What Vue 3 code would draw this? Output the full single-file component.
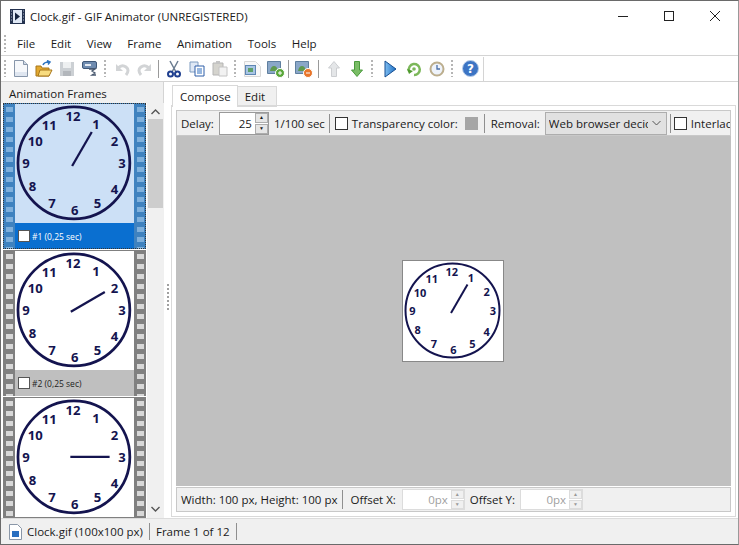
<script setup>
const menus = ['File', 'Edit', 'View', 'Frame', 'Animation', 'Tools', 'Help']

const numerals = [
  { t: '12', x: 48.7, y: 10.7 },
  { t: '1', x: 68, y: 17.3 },
  { t: '2', x: 83.6, y: 31.3 },
  { t: '3', x: 90, y: 49.7 },
  { t: '4', x: 83.7, y: 71.3 },
  { t: '5', x: 69.3, y: 83.3 },
  { t: '6', x: 50.3, y: 89.3 },
  { t: '7', x: 31, y: 83.3 },
  { t: '8', x: 14.7, y: 69 },
  { t: '9', x: 9.3, y: 50 },
  { t: '10', x: 17, y: 31.7 },
  { t: '11', x: 28.7, y: 18 },
]

// the third frame runs past the bottom of the list, its caption is never seen
const frames = [
  { id: 1, hour: 1, selected: true, caption: true },
  { id: 2, hour: 2, selected: false, caption: true },
  { id: 3, hour: 3, selected: false, caption: false },
]

const hand = (hour) => {
  const a = (hour * 30 * Math.PI) / 180
  return {
    x1: 49.5 - 3 * Math.sin(a),
    y1: 49.5 + 3 * Math.cos(a),
    x2: 49.5 + 30 * Math.sin(a),
    y2: 49.5 - 30 * Math.cos(a),
  }
}

const holes = Array.from({ length: 15 })
</script>

<template>
  <div class="window">
    <header class="titlebar">
      <svg class="app-icon" width="15" height="15" viewBox="0 0 15 15">
        <rect width="15" height="15" fill="#24324f" />
        <rect x="3" y="1" width="9" height="13" fill="#dfe8f5" />
        <path d="M5 3.5l5 4-5 4z" fill="#14233f" />
        <path d="M1 2h1M1 5h1M1 8h1M1 11h1M13 2h1M13 5h1M13 8h1M13 11h1" stroke="#aebbd0" />
      </svg>
      <span class="title">Clock.gif - GIF Animator (UNREGISTERED)</span>
      <div class="controls">
        <button class="ctl"><svg width="10" height="10"><path d="M0 5.5h10" stroke="#222" /></svg></button>
        <button class="ctl"><svg width="10" height="10"><rect x=".5" y=".5" width="9" height="9" fill="none" stroke="#222" /></svg></button>
        <button class="ctl"><svg width="10" height="10"><path d="M0 0l10 10M10 0L0 10" stroke="#222" /></svg></button>
      </div>
    </header>

    <nav class="menubar">
      <i class="grip"></i>
      <span v-for="m in menus" :key="m" class="menu">{{ m }}</span>
    </nav>

    <div class="toolbar">
      <i class="grip"></i>
      <button class="tool"><svg width="14" height="17" viewBox="0 0 14 17"><path d="M.5.5h9l4 4v12H.5z" fill="#f6f8fb" stroke="#8796aa" /><path d="M9.5.5v4h4" fill="#cfd9e6" stroke="#8796aa" /><path d="M1 12h12v4H1z" fill="#dfe6f0" /></svg></button>
      <button class="tool"><svg width="18" height="18" viewBox="0 0 18 18"><path d="M1 6h5l1 2h7v8H1z" fill="#e3a92f" stroke="#a8761a" /><path d="M3 16l2-6h12l-3 6z" fill="#f8dc7f" stroke="#a8761a" /><path d="M8 5q1-3 6-3M12 .5l3 1.5-2 2.5" fill="none" stroke="#2f74c0" stroke-width="1.5" /></svg></button>
      <button class="tool"><svg width="16" height="16" viewBox="0 0 16 16"><path d="M1 1h14v14H1z" fill="#ccd0d4" /><path d="M4 1h8v6H4z" fill="#eef0f1" /><path d="M4 10h8v5H4z" fill="#b3b7bc" /></svg></button>
      <button class="tool"><svg width="15" height="18" viewBox="0 0 15 18"><rect x=".5" y="1.5" width="14" height="7" rx="1.5" fill="#6f8cb0" stroke="#3f5878" /><path d="M3 4h6v2H3z" fill="#e4eaf2" /><path d="M7 9h6l-3 2 3 2-3 2h4" fill="none" stroke="#4a5a70" stroke-width="1.3" /></svg></button>
      <i class="dots"></i>
      <button class="tool nudge"><svg width="16" height="16" viewBox="0 0 16 16"><path d="M3 7q4-4 8-1t0 8" fill="none" stroke="#d2d4d6" stroke-width="3" /><path d="M1 3v7h7z" fill="#d2d4d6" /></svg></button>
      <button class="tool"><svg width="16" height="16" viewBox="0 0 16 16"><path d="M13 7q-4-4-8-1t0 8" fill="none" stroke="#d2d4d6" stroke-width="3" /><path d="M15 3v7H8z" fill="#d2d4d6" /></svg></button>
      <i class="line"></i>
      <button class="tool"><svg width="14" height="18" viewBox="0 0 14 18"><path d="M3 1l6 11M11 1L5 12" stroke="#6b7c90" stroke-width="1.5" /><circle cx="3.5" cy="14" r="2.5" fill="none" stroke="#1f3f8f" stroke-width="2" /><circle cx="10.5" cy="14" r="2.5" fill="none" stroke="#1f3f8f" stroke-width="2" /></svg></button>
      <button class="tool"><svg width="16" height="16" viewBox="0 0 16 16"><path d="M1 1h8v10H1z" fill="#dfe8f5" stroke="#7f9cc0" /><path d="M6 5h9v10H6z" fill="#fff" stroke="#2f5fa8" /><path d="M8 8h5M8 10h5M8 12h5" stroke="#2f6fc0" /></svg></button>
      <button class="tool"><svg width="16" height="17" viewBox="0 0 16 17"><path d="M1 3h10v12H1z" fill="#d5d4ce" stroke="#b5b5b5" /><path d="M4 1h4v3H4z" fill="#c4c4c4" /><path d="M7 7h8v9H7z" fill="#f2f2f2" stroke="#c4c4c4" /></svg></button>
      <i class="dots"></i>
      <button class="tool nudge"><svg width="17" height="16" viewBox="0 0 17 16"><path d="M.5.5h11l5 5v10H.5z" fill="#f8f8f8" stroke="#d8d8d8" /><rect x="1.5" y="4.5" width="10" height="9" fill="#a9c6e4" stroke="#5f86b4" /><rect x="4" y="7" width="5" height="4" fill="#5fa06a" /></svg></button>
      <button class="tool nudge"><svg width="18" height="18" viewBox="0 0 18 18"><path d="M.5 1.5h13v12H.5z" fill="#8aa7c8" stroke="#5f7f9f" /><path d="M3 11q1-5 4-5t4 5z" fill="#5f9a4f" /><circle cx="13" cy="13" r="4.5" fill="#5aa73a" stroke="#fff" /><path d="M11 13h4M13 11v4" stroke="#fff" /></svg></button>
      <i class="line"></i>
      <button class="tool"><svg width="18" height="18" viewBox="0 0 18 18"><path d="M.5 1.5h13v12H.5z" fill="#8aa7c8" stroke="#5f7f9f" /><path d="M3 11q1-5 4-5t4 5z" fill="#5f9a4f" /><circle cx="13" cy="13" r="4.5" fill="#e8752a" stroke="#fff" /><path d="M11 13h4" stroke="#fff" /></svg></button>
      <i class="line"></i>
      <button class="tool"><svg width="14" height="16" viewBox="0 0 14 16"><path d="M7 .5L12.5 7H9.5v8.5h-5V7H1.5z" fill="#e4e6e8" stroke="#ccced1" /></svg></button>
      <button class="tool"><svg width="14" height="16" viewBox="0 0 14 16"><path d="M7 15.5L12.5 9H9.5V.5h-5V9H1.5z" fill="#7abd66" stroke="#4a9a3c" /></svg></button>
      <i class="dots"></i>
      <button class="tool shift"><svg width="13" height="18" viewBox="0 0 13 18"><defs><linearGradient id="pl" x1="0" x2="1"><stop offset="0" stop-color="#7fbdf0" /><stop offset="1" stop-color="#1c6fc4" /></linearGradient></defs><path d="M1 1l11 8-11 8z" fill="url(#pl)" stroke="#174f92" /></svg></button>
      <button class="tool"><svg width="16" height="16" viewBox="0 0 16 16"><path d="M3 10A5.5 5.5 0 1 1 8 14" fill="none" stroke="#7cb85a" stroke-width="2.5" /><path d="M1 8l2 5 4-3z" fill="#4f9a2e" /><circle cx="8" cy="8" r="1.8" fill="#7cb85a" /></svg></button>
      <button class="tool"><svg width="16" height="16" viewBox="0 0 16 16"><circle cx="8" cy="8" r="6.5" fill="#eef3fb" stroke="#bcae8e" stroke-width="2" /><path d="M8 4v4h3" fill="none" stroke="#4a6fa8" stroke-width="1.3" /></svg></button>
      <i class="dots"></i>
      <button class="tool shift"><svg width="17" height="17" viewBox="0 0 17 17"><circle cx="8.5" cy="8.5" r="8" fill="#3c74c4" stroke="#b7cdea" /><text x="8.5" y="12.5" text-anchor="middle" class="q">?</text></svg></button>
      <i class="line end"></i>
    </div>

    <main class="workspace">
      <aside class="side">
        <h2 class="side-head">Animation Frames</h2>
        <div class="side-body">
          <div class="frame-list">
            <div v-for="f in frames" :key="f.id" class="frame" :class="{ selected: f.selected }">
              <div class="film">
                <i v-for="(h, n) in holes" :key="n"></i>
              </div>
              <div class="frame-mid">
                <svg class="thumb" viewBox="0 0 100 100">
                  <circle cx="49.5" cy="49.5" r="47" fill="none" stroke="#14144f" stroke-width="2.3" />
                  <text v-for="d in numerals" :key="d.t" :x="d.x" :y="d.y + 4" text-anchor="middle" class="num">{{ d.t }}</text>
                  <line v-bind="hand(f.hour)" stroke="#14144f" stroke-width="1.9" />
                </svg>
                <div v-if="f.caption" class="caption">
                  <i class="check small"></i>
                  <span>#{{ f.id }} (0,25 sec)</span>
                </div>
              </div>
              <div class="film">
                <i v-for="(h, n) in holes" :key="n"></i>
              </div>
            </div>
          </div>
          <div class="scroll">
            <svg class="arrow" width="9" height="6"><path d="M.5 5L4.5 1l4 4" fill="none" stroke="#555" stroke-width="1.4" /></svg>
            <div class="thumb-bar"></div>
            <svg class="arrow bottom" width="9" height="6"><path d="M.5 1l4 4 4-4" fill="none" stroke="#555" stroke-width="1.4" /></svg>
          </div>
        </div>
      </aside>

      <div class="splitter"><i class="split-dots"></i></div>

      <section class="right">
        <div class="tabs">
          <span class="tab active">Compose</span>
          <span class="tab">Edit</span>
        </div>
        <div class="page">
          <div class="opts">
            <span>Delay:</span>
            <div class="spin delay">
              <span class="val">25</span>
              <div class="btns"><b>▲</b><b>▼</b></div>
            </div>
            <span>1/100 sec</span>
            <i class="vline after-sec"></i>
            <i class="check"></i>
            <span class="pull">Transparency color:</span>
            <i class="swatch"></i>
            <i class="vline after-swatch"></i>
            <span class="tight">Removal:</span>
            <div class="select">
              <span class="sel-text">Web browser decides</span>
              <svg width="9" height="6"><path d="M.5 1l4 4 4-4" fill="none" stroke="#555" /></svg>
            </div>
            <i class="vline pull3"></i>
            <i class="check pull3"></i>
            <span class="pull">Interlaced</span>
          </div>
          <div class="canvas">
            <svg class="stage" width="102" height="102" viewBox="-1 -1 102 102">
              <rect x="-.5" y="-.5" width="101" height="101" fill="#fff" stroke="#888" />
              <circle cx="49.5" cy="49.5" r="47" fill="none" stroke="#14144f" stroke-width="2" />
              <text v-for="d in numerals" :key="d.t" :x="d.x" :y="d.y + 4" text-anchor="middle" class="num">{{ d.t }}</text>
              <line v-bind="hand(1)" stroke="#14144f" stroke-width="2" />
            </svg>
          </div>
          <div class="info">
            <span>Width: 100 px, Height: 100 px</span>
            <i class="vline"></i>
            <span class="off-x">Offset X:</span>
            <div class="spin off first">
              <span class="val dim">0px</span>
              <div class="btns dim"><b>▲</b><b>▼</b></div>
            </div>
            <span>Offset Y:</span>
            <div class="spin off">
              <span class="val dim">0px</span>
              <div class="btns dim"><b>▲</b><b>▼</b></div>
            </div>
          </div>
        </div>
      </section>
    </main>

    <footer class="status">
      <svg width="13" height="16" viewBox="0 0 13 16"><path d="M.5.5h8l4 4v11H.5z" fill="#fff" stroke="#8a97a8" /><rect x="3" y="7" width="7" height="6" fill="#2a6fc0" /></svg>
      <span class="st-file">Clock.gif (100x100 px)</span>
      <i class="vline st"></i>
      <span class="st-frame">Frame 1 of 12</span>
      <i class="vline st"></i>
    </footer>
  </div>
</template>

<style>
html, body {
  margin: 0;
  background: #fff;
}
</style>

<style scoped>
.window {
  width: 739px;
  height: 545px;
  box-sizing: border-box;
  display: flex;
  flex-direction: column;
  border: 1px solid #6a6a6a;
  border-right-color: #999;
  background: #fff;
  font-family: "Open Sans", "Noto Sans", sans-serif;
  font-size: 11.5px;
  color: #1a1a1a;
  overflow: hidden;
}
i {
  display: block;
  flex: none;
}
.titlebar {
  height: 30px;
  display: flex;
  align-items: center;
  padding-left: 9px;
}
.title {
  margin-left: 5px;
}
.controls {
  margin-left: auto;
  display: flex;
}
.ctl {
  width: 46px;
  height: 30px;
  border: 0;
  padding: 0;
  background: none;
  display: flex;
  align-items: center;
  justify-content: center;
}
.menubar {
  height: 24px;
  display: flex;
  align-items: center;
  border-bottom: 1px solid #d4d4d4;
  padding-left: 3px;
}
.menu {
  padding: 0 7.75px;
}
.menu:first-of-type {
  padding-left: 8px;
}
.grip {
  width: 2px;
  height: 17px;
  margin-right: 3px;
  background: repeating-linear-gradient(#b5b5b5 0 2px, transparent 2px 4px);
}
.toolbar {
  height: 25px;
  display: flex;
  align-items: center;
  border-bottom: 1px solid #d4d4d4;
  padding-left: 3px;
}
.tool {
  width: 23px;
  height: 24px;
  flex: none;
  border: 0;
  padding: 0;
  background: none;
  display: flex;
  align-items: center;
  justify-content: center;
}
.tool.nudge svg {
  margin-left: 4px;
}
.tool.shift {
  margin-left: 3px;
}
.dots {
  width: 2px;
  height: 17px;
  margin: 0 3px;
  background: repeating-linear-gradient(#b5b5b5 0 2px, transparent 2px 4px);
}
.line {
  width: 1px;
  height: 18px;
  margin: 0 3px;
  background: #9a9a9a;
}
.line.end {
  background: #d4d4d4;
  height: 24px;
  margin-left: 1px;
}
.q {
  font-family: "DejaVu Sans", sans-serif;
  font-size: 12px;
  font-weight: 700;
  fill: #fff;
}
.workspace {
  flex: 1;
  min-height: 0;
  display: flex;
  background: #fff;
}
.side {
  width: 163px;
  display: flex;
  flex-direction: column;
  background: #f0f0f0;
}
.side-head {
  margin: 0;
  height: 21px;
  line-height: 24px;
  padding-left: 8px;
  font-size: 11.5px;
  font-weight: 400;
  border-right: 1px solid #d4d4d4;
}
.side-body {
  flex: 1;
  min-height: 0;
  display: flex;
}
.frame-list {
  width: 146px;
  overflow: hidden;
  padding-left: 2px;
  box-sizing: border-box;
  background: #fff;
  flex: none;
}
.frame {
  width: 143px;
  height: 146px;
  margin-bottom: 1px;
  display: flex;
  overflow: hidden;
  background: #808080;
}
.frame.selected {
  background: #3f82bf;
  outline: 1px dotted #333;
  outline-offset: -1px;
}
.film {
  width: 12px;
  flex: none;
  display: flex;
  flex-direction: column;
  align-items: center;
  gap: 5px;
  padding-top: 4px;
}
.film i {
  width: 7px;
  height: 5px;
  background: #d8d8d8;
}
.selected .film i {
  background: #7fb0dc;
}
.frame-mid {
  width: 119px;
  display: flex;
  flex-direction: column;
}
.thumb {
  width: 119px;
  height: 119px;
  margin-top: 1px;
  background: #fff;
  flex: none;
}
.selected .thumb {
  background: #cce0f6;
}
.caption {
  flex: 1;
  display: flex;
  align-items: center;
  gap: 2px;
  padding-left: 3px;
  background: #bfbfbf;
  font-size: 8.5px;
  color: #222;
}
.selected .caption {
  background: #0a6fd0;
  color: #fff;
}
.num {
  font-family: "Open Sans", sans-serif;
  font-size: 11px;
  font-weight: 700;
  fill: #14144f;
}
.check {
  width: 13px;
  height: 13px;
  box-sizing: border-box;
  border: 1px solid #333;
  background: #fff;
}
.check.small {
  width: 12px;
  height: 12px;
  border-color: #555;
}
.scroll {
  width: 16px;
  flex: none;
  display: flex;
  flex-direction: column;
  align-items: center;
  background: #f0f0f0;
}
.arrow {
  margin-top: 6px;
}
.arrow.bottom {
  margin-top: auto;
  margin-bottom: 6px;
}
.thumb-bar {
  width: 15px;
  height: 89px;
  margin-top: 4px;
  background: #cdcdcd;
}
.splitter {
  width: 7px;
  flex: none;
  display: flex;
  align-items: center;
  justify-content: center;
}
.split-dots {
  width: 2px;
  height: 26px;
  margin-top: -6px;
  background: repeating-linear-gradient(#a0a0a0 0 2px, transparent 2px 4px);
}
.right {
  flex: 1;
  min-width: 0;
  display: flex;
  flex-direction: column;
  padding: 3px 2px 1px 0;
}
.tabs {
  display: flex;
  height: 20px;
  padding-left: 1px;
}
.tab {
  height: 19px;
  line-height: 19px;
  padding: 0 11px 0 7px;
  background: #f0f0f0;
  border: 1px solid #d9d9d9;
  border-left: 0;
  margin-top: 1px;
}
.tab.active {
  height: 21px;
  line-height: 22px;
  padding: 0 6px 0 7px;
  margin-top: 0;
  background: #fff;
  border-left: 1px solid #d9d9d9;
  border-bottom: 0;
  position: relative;
  z-index: 1;
}
.page {
  flex: 1;
  min-height: 0;
  display: flex;
  flex-direction: column;
  border: 1px solid #d9d9d9;
  padding: 4px;
}
.opts, .info {
  display: flex;
  align-items: center;
  flex: none;
  gap: 5px;
  padding-left: 4px;
  background: #f0f0f0;
  white-space: nowrap;
  overflow: hidden;
  border: 1px solid #c8c8c8;
}
.opts > *, .info > * {
  flex: none;
}
.opts {
  height: 24px;
}
.info {
  height: 23px;
  margin-top: 1px;
}
.vline {
  width: 1px;
  height: 19px;
  background: #8f8f8f;
}
.after-sec {
  margin-left: -1px;
}
.after-swatch {
  margin-left: 1px;
}
.pull {
  margin-left: -1px;
}
.pull3 {
  margin-left: -2px;
}
.tight {
  margin-left: 1px;
}
.off-x {
  margin-left: 2px;
}
.off.first {
  margin-left: 1px;
}
.spin {
  display: flex;
  align-items: center;
  height: 23px;
  box-sizing: border-box;
  background: #fff;
  border: 1px solid #9a9a9a;
}
.delay {
  width: 50px;
}
.off {
  width: 63px;
  height: 21px;
  border-color: #dcdcdc;
}
.val {
  flex: 1;
  text-align: right;
  padding-right: 3px;
}
.val.dim {
  color: #a0a0a0;
}
.btns {
  width: 13px;
  height: 100%;
  flex: none;
  display: flex;
  flex-direction: column;
  gap: 1px;
  background: #fff;
}
.btns b {
  flex: 1;
  background: #e6e6e6;
  border: 1px solid #adadad;
  font-size: 5px;
  line-height: 7px;
  text-align: center;
  font-weight: 400;
  overflow: hidden;
}
.btns.dim b {
  border-color: #dcdcdc;
  background: #f0f0f0;
  color: #999;
}
.swatch {
  width: 13px;
  height: 13px;
  background: #a6a6a6;
  margin-left: 2px;
}
.select {
  width: 122px;
  height: 23px;
  box-sizing: border-box;
  display: flex;
  align-items: center;
  gap: 4px;
  padding: 0 5px 0 3px;
  background: #e1e1e1;
  border: 1px solid #adadad;
}
.sel-text {
  flex: 1;
  min-width: 0;
  overflow: hidden;
}
.canvas {
  flex: 1;
  min-height: 0;
  display: flex;
  align-items: center;
  justify-content: center;
  background: #c0c0c0;
}
.stage {
  flex: none;
  margin-right: 1px;
}
.status {
  height: 25px;
  flex: none;
  display: flex;
  align-items: center;
  padding-left: 8px;
  background: #f0f0f0;
  border-top: 1px solid #dcdcdc;
}
.st-file {
  margin-left: 5px;
}
.st-frame {
  margin-left: 6px;
}
.vline.st {
  margin-left: 6px;
  height: 17px;
}
</style>
